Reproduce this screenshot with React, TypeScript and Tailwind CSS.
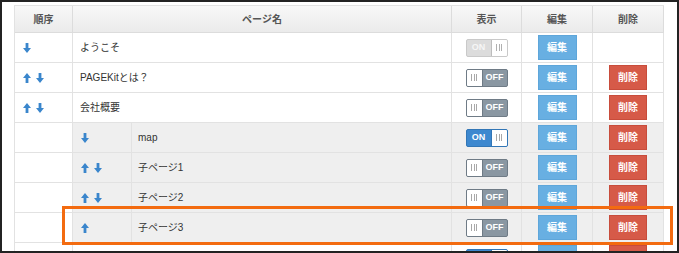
import React from "react";

const FONT = { fontFamily: "'Liberation Sans','Noto Sans CJK JP',sans-serif" };

function Arrow({ dir }: { dir: "up" | "down" }) {
  const pts =
    dir === "up"
      ? "4,0 8,5 5.4,5 5.4,10 2.6,10 2.6,5 0,5"
      : "4,10 8,5 5.4,5 5.4,0 2.6,0 2.6,5 0,5";
  return (
    <svg width="8" height="10" viewBox="0 0 8 10" className="block">
      <polygon points={pts} fill="#3a86cc" />
    </svg>
  );
}

function Grip({ color }: { color: string }) {
  return (
    <span className="flex gap-[1.5px]">
      <span className={`w-px h-[7px] ${color}`} />
      <span className={`w-px h-[7px] ${color}`} />
      <span className={`w-px h-[7px] ${color}`} />
    </span>
  );
}

type ToggleKind = "disabled" | "on" | "off";

function Toggle({ kind }: { kind: ToggleKind }) {
  if (kind === "off") {
    return (
      <div className="flex w-[42px] h-[18px] rounded-[2px] border border-[#6f7b86] bg-[#8a97a2] overflow-hidden">
        <div className="w-[16px] bg-white flex items-center justify-center border-r border-[#6f7b86]">
          <Grip color="bg-[#a8a8a8]" />
        </div>
        <div className="flex-1 flex items-center justify-center text-white text-[9px] font-bold leading-none">
          OFF
        </div>
      </div>
    );
  }
  if (kind === "on") {
    return (
      <div className="flex w-[42px] h-[18px] rounded-[2px] border border-[#3276b6] bg-[#3d88cf] overflow-hidden">
        <div className="flex-1 flex items-center justify-center text-white text-[9px] font-bold leading-none">
          ON
        </div>
        <div className="w-[16px] bg-white flex items-center justify-center border-l border-[#3276b6]">
          <Grip color="bg-[#a8a8a8]" />
        </div>
      </div>
    );
  }
  return (
    <div className="flex w-[42px] h-[18px] rounded-[2px] border border-[#c9c9c9] bg-[#dcdcdc] overflow-hidden">
      <div className="flex-1 flex items-center justify-center text-[#f6f6f6] text-[9px] font-bold leading-none">
        ON
      </div>
      <div className="w-[16px] bg-white flex items-center justify-center border-l border-[#bdbdbd]">
        <Grip color="bg-[#b0b0b0]" />
      </div>
    </div>
  );
}

function EditBtn() {
  return (
    <div className="w-[39px] h-[25px] bg-[#68afe2] border border-[#5ea6da] flex items-center justify-center text-white text-[10px] font-bold">
      編集
    </div>
  );
}

function DelBtn() {
  return (
    <div className="w-[38px] h-[25px] bg-[#d65a48] border border-[#c84c3b] flex items-center justify-center text-white text-[10px] font-bold">
      削除
    </div>
  );
}

type Row = {
  arrows: ("up" | "down")[];
  name: string;
  toggle: ToggleKind;
  del: boolean;
};

const top: Row[] = [
  { arrows: ["down"], name: "ようこそ", toggle: "disabled", del: false },
  { arrows: ["up", "down"], name: "PAGEKitとは？", toggle: "off", del: true },
  { arrows: ["up", "down"], name: "会社概要", toggle: "off", del: true },
];

const sub: Row[] = [
  { arrows: ["down"], name: "map", toggle: "on", del: true },
  { arrows: ["up", "down"], name: "子ページ1", toggle: "off", del: true },
  { arrows: ["up", "down"], name: "子ページ2", toggle: "off", del: true },
  { arrows: ["up"], name: "子ページ3", toggle: "off", del: true },
];

const bottom: Row = { arrows: ["up", "down"], name: "採用情報", toggle: "on", del: true };

const cell = "border-r border-b border-[#e2e2e2] flex items-center";

function Arrows({ arrows }: { arrows: ("up" | "down")[] }) {
  return (
    <div className="flex gap-[5px]">
      {arrows.map((a, i) => (
        <Arrow key={i} dir={a} />
      ))}
    </div>
  );
}

function Controls({ r }: { r: Row }) {
  return (
    <>
      <div className={`${cell} justify-center`}>
        <Toggle kind={r.toggle} />
      </div>
      <div className={`${cell} justify-center`}>
        <EditBtn />
      </div>
      <div className={`${cell} justify-center`}>{r.del ? <DelBtn /> : null}</div>
    </>
  );
}

function TopRow({ r }: { r: Row }) {
  return (
    <div className="grid grid-cols-[58px_379px_70px_71px_71px] h-[30px] bg-white">
      <div className={`${cell} pl-[8px]`}>
        <Arrows arrows={r.arrows} />
      </div>
      <div className={`${cell} pl-[7px] text-[10px] text-[#333]`}>{r.name}</div>
      <Controls r={r} />
    </div>
  );
}

function SubRow({ r }: { r: Row }) {
  return (
    <div className="grid grid-cols-[58px_59px_320px_70px_71px_71px] h-[30px]">
      <div className={`${cell} bg-white`} />
      <div className={`${cell} pl-[8px] bg-[#efefef]`}>
        <Arrows arrows={r.arrows} />
      </div>
      <div className={`${cell} pl-[6px] text-[10px] text-[#333] bg-[#efefef]`}>{r.name}</div>
      <div className={`${cell} justify-center bg-[#efefef]`}>
        <Toggle kind={r.toggle} />
      </div>
      <div className={`${cell} justify-center bg-[#efefef]`}>
        <EditBtn />
      </div>
      <div className={`${cell} justify-center bg-[#efefef]`}>{r.del ? <DelBtn /> : null}</div>
    </div>
  );
}

export default function App() {
  return (
    <div
      className="relative w-[679px] h-[253px] border-2 border-[#232323] bg-white overflow-hidden"
      style={FONT}
    >
      <div className="pt-[3px] pl-[12px]">
        <div className="w-[650px] border-l border-t border-[#e2e2e2]">
          <div className="grid grid-cols-[58px_379px_70px_71px_71px] h-[27px] bg-linear-to-b from-[#f8f8f8] to-[#eaeaea] text-[10px] font-bold text-[#555]">
            <div className="border-r border-b border-[#dcdcdc] flex items-center justify-center">順序</div>
            <div className="border-r border-b border-[#dcdcdc] flex items-center justify-center">ページ名</div>
            <div className="border-r border-b border-[#dcdcdc] flex items-center justify-center">表示</div>
            <div className="border-r border-b border-[#dcdcdc] flex items-center justify-center">編集</div>
            <div className="border-r border-b border-[#dcdcdc] flex items-center justify-center">削除</div>
          </div>
          {top.map((r, i) => (
            <TopRow key={i} r={r} />
          ))}
          {sub.map((r, i) => (
            <SubRow key={i} r={r} />
          ))}
          <TopRow r={bottom} />
        </div>
      </div>
      <div className="absolute left-[60px] top-[204px] w-[611px] h-[39px] border-[3px] border-[#f36b10]" />
    </div>
  );
}
